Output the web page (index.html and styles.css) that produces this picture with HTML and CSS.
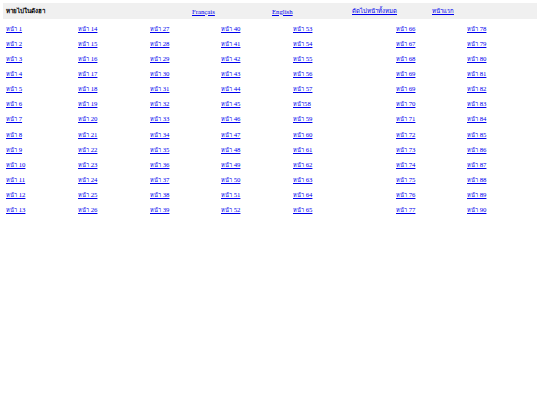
FILE: index.html
```html
<!DOCTYPE html>
<html lang="th">
<head>
<meta charset="utf-8">
<title>หายไปในดังฮา</title>
<link rel="stylesheet" href="styles.css">
</head>
<body>
<div class="page">
  <div class="topbar">
    <span class="title">หายไปในดังฮา</span>
    <a class="lang" href="#">Français</a>
    <a class="lang" href="#">English</a>
    <a class="lang th-link" href="#">ตัดไปหน้าทั้งหมด</a>
    <a class="lang th-link" href="#">หน้าแรก</a>
  </div>
  <div class="grid">
    <div class="col"><a href="#"><span class="th">หน้า</span> 1</a><a href="#"><span class="th">หน้า</span> 2</a><a href="#"><span class="th">หน้า</span> 3</a><a href="#"><span class="th">หน้า</span> 4</a><a href="#"><span class="th">หน้า</span> 5</a><a href="#"><span class="th">หน้า</span> 6</a><a href="#"><span class="th">หน้า</span> 7</a><a href="#"><span class="th">หน้า</span> 8</a><a href="#"><span class="th">หน้า</span> 9</a><a href="#"><span class="th">หน้า</span> 10</a><a href="#"><span class="th">หน้า</span> 11</a><a href="#"><span class="th">หน้า</span> 12</a><a href="#"><span class="th">หน้า</span> 13</a></div>
    <div class="col"><a href="#"><span class="th">หน้า</span> 14</a><a href="#"><span class="th">หน้า</span> 15</a><a href="#"><span class="th">หน้า</span> 16</a><a href="#"><span class="th">หน้า</span> 17</a><a href="#"><span class="th">หน้า</span> 18</a><a href="#"><span class="th">หน้า</span> 19</a><a href="#"><span class="th">หน้า</span> 20</a><a href="#"><span class="th">หน้า</span> 21</a><a href="#"><span class="th">หน้า</span> 22</a><a href="#"><span class="th">หน้า</span> 23</a><a href="#"><span class="th">หน้า</span> 24</a><a href="#"><span class="th">หน้า</span> 25</a><a href="#"><span class="th">หน้า</span> 26</a></div>
    <div class="col"><a href="#"><span class="th">หน้า</span> 27</a><a href="#"><span class="th">หน้า</span> 28</a><a href="#"><span class="th">หน้า</span> 29</a><a href="#"><span class="th">หน้า</span> 30</a><a href="#"><span class="th">หน้า</span> 31</a><a href="#"><span class="th">หน้า</span> 32</a><a href="#"><span class="th">หน้า</span> 33</a><a href="#"><span class="th">หน้า</span> 34</a><a href="#"><span class="th">หน้า</span> 35</a><a href="#"><span class="th">หน้า</span> 36</a><a href="#"><span class="th">หน้า</span> 37</a><a href="#"><span class="th">หน้า</span> 38</a><a href="#"><span class="th">หน้า</span> 39</a></div>
    <div class="col"><a href="#"><span class="th">หน้า</span> 40</a><a href="#"><span class="th">หน้า</span> 41</a><a href="#"><span class="th">หน้า</span> 42</a><a href="#"><span class="th">หน้า</span> 43</a><a href="#"><span class="th">หน้า</span> 44</a><a href="#"><span class="th">หน้า</span> 45</a><a href="#"><span class="th">หน้า</span> 46</a><a href="#"><span class="th">หน้า</span> 47</a><a href="#"><span class="th">หน้า</span> 48</a><a href="#"><span class="th">หน้า</span> 49</a><a href="#"><span class="th">หน้า</span> 50</a><a href="#"><span class="th">หน้า</span> 51</a><a href="#"><span class="th">หน้า</span> 52</a></div>
    <div class="col"><a href="#"><span class="th">หน้า</span> 53</a><a href="#"><span class="th">หน้า</span> 54</a><a href="#"><span class="th">หน้า</span> 55</a><a href="#"><span class="th">หน้า</span> 56</a><a href="#"><span class="th">หน้า</span> 57</a><a href="#"><span class="th">หน้า</span>58</a><a href="#"><span class="th">หน้า</span> 59</a><a href="#"><span class="th">หน้า</span> 60</a><a href="#"><span class="th">หน้า</span> 61</a><a href="#"><span class="th">หน้า</span> 62</a><a href="#"><span class="th">หน้า</span> 63</a><a href="#"><span class="th">หน้า</span> 64</a><a href="#"><span class="th">หน้า</span> 65</a></div>
    <div class="col"><a href="#"><span class="th">หน้า</span> 66</a><a href="#"><span class="th">หน้า</span> 67</a><a href="#"><span class="th">หน้า</span> 68</a><a href="#"><span class="th">หน้า</span> 69</a><a href="#"><span class="th">หน้า</span> 69</a><a href="#"><span class="th">หน้า</span> 70</a><a href="#"><span class="th">หน้า</span> 71</a><a href="#"><span class="th">หน้า</span> 72</a><a href="#"><span class="th">หน้า</span> 73</a><a href="#"><span class="th">หน้า</span> 74</a><a href="#"><span class="th">หน้า</span> 75</a><a href="#"><span class="th">หน้า</span> 76</a><a href="#"><span class="th">หน้า</span> 77</a></div>
    <div class="col"><a href="#"><span class="th">หน้า</span> 78</a><a href="#"><span class="th">หน้า</span> 79</a><a href="#"><span class="th">หน้า</span> 80</a><a href="#"><span class="th">หน้า</span> 81</a><a href="#"><span class="th">หน้า</span> 82</a><a href="#"><span class="th">หน้า</span> 83</a><a href="#"><span class="th">หน้า</span> 84</a><a href="#"><span class="th">หน้า</span> 85</a><a href="#"><span class="th">หน้า</span> 86</a><a href="#"><span class="th">หน้า</span> 87</a><a href="#"><span class="th">หน้า</span> 88</a><a href="#"><span class="th">หน้า</span> 89</a><a href="#"><span class="th">หน้า</span> 90</a></div>
  </div>
</div>
</body>
</html>
```
FILE: styles.css
```css
html, body {
  margin: 0;
  padding: 0;
  background: #ffffff;
}
.page {
  padding: 3px;
  font-family: "Liberation Serif", "Times New Roman", serif;
  font-size: 6.75px;
}
a {
  color: #0000ee;
  text-decoration: underline;
}
.topbar {
  display: flex;
  align-items: center;
  height: 16px;
  background: #f0f0f0;
  padding-left: 3px;
}
.title {
  width: 186px;
  font-family: "Liberation Sans", Arial, sans-serif;
  font-size: 6.2px;
  font-weight: bold;
  color: #000;
}
.lang {
  width: 80px;
}
.th-link {
  font-size: 6px;
}
.grid {
  display: grid;
  grid-template-columns: 72px 72px 71px 72px 103px 71px 1fr;
  padding-left: 3px;
  padding-top: 1.5px;
}
.col {
  display: flex;
  flex-direction: column;
}
.col a {
  height: 15.17px;
  line-height: 15.17px;
  white-space: nowrap;
}
.th {
  font-size: 5.6px;
}
```
